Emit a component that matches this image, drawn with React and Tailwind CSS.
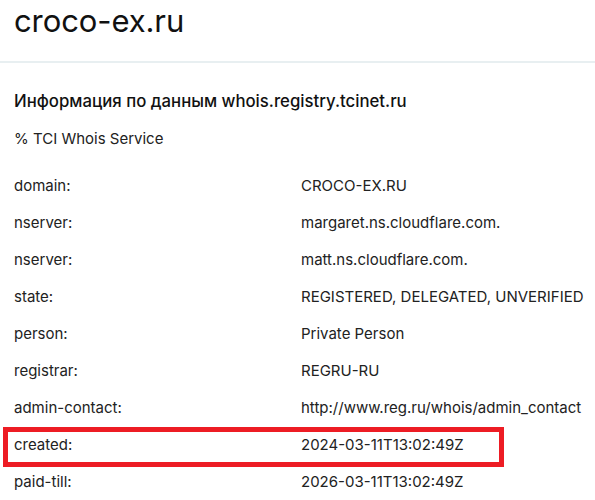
import React from 'react'

const rows = [
  ['domain:', 'CROCO-EX.RU'],
  ['nserver:', 'margaret.ns.cloudflare.com.'],
  ['nserver:', 'matt.ns.cloudflare.com.'],
  ['state:', 'REGISTERED, DELEGATED, UNVERIFIED'],
  ['person:', 'Private Person'],
  ['registrar:', 'REGRU-RU'],
  ['admin-contact:', 'http://www.reg.ru/whois/admin_contact'],
  ['created:', '2024-03-11T13:02:49Z', true],
  ['paid-till:', '2026-03-11T13:02:49Z'],
]

const App = () => {
  return (
    <div className="w-[595px] h-[500px] overflow-hidden bg-white text-[#111] font-['Inter',sans-serif]">
      {/* Title */}
      <h1 className="px-[14px] pt-[1px] h-[61px] text-[31px] leading-[40px] font-normal tracking-[-0.1px]">
        croco-ex.ru
      </h1>
      <div className="h-[2px] bg-[#e8eff1]" />

      {/* Section */}
      <h2 className="px-[14px] pt-[26px] text-[16.75px] leading-[24px] font-medium whitespace-nowrap">
        Информация по данным whois.registry.tcinet.ru
      </h2>
      <p className="px-[14px] pt-[14px] text-[15px] leading-[24px] text-[#222]">% TCI Whois Service</p>

      <div className="mt-[17px] flex flex-col">
        {rows.map(([k, v, hl], i) => (
          <div key={i} className="relative grid grid-cols-[287px_1fr] pl-[14px] h-[37px] items-center text-[15px] text-[#222] whitespace-nowrap">
            <span>{k}</span>
            <span>{v}</span>
            {hl && (
              <div className="absolute left-[3px] top-0 w-[501px] h-[40px] border-[5px] border-[#ed1c24]" />
            )}
          </div>
        ))}
      </div>
    </div>
  )
}

export default App
